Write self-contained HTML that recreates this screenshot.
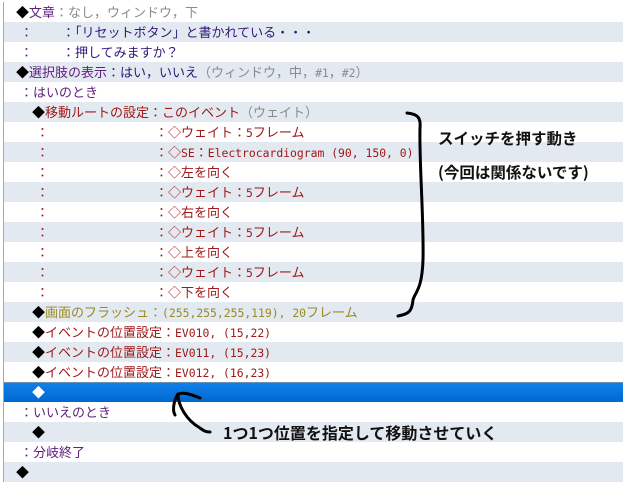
<!DOCTYPE html>
<html><head><meta charset="utf-8"><style>
body{margin:0;width:623px;height:480px;overflow:hidden;background:#fff;position:relative;font-family:"Noto Sans CJK JP",sans-serif;font-size:13px;}
#list{position:absolute;left:3px;top:2px;width:620px;border-left:1px solid #a0a8b0;}
.r{height:20px;line-height:20px;position:relative;white-space:nowrap;}
.r:nth-child(even){background:#e3e9f0;}
.r span.a{position:absolute;top:0;}
i{font-style:normal;font-family:"DejaVu Sans Mono",monospace;font-size:11.4px;}
.sel{background:linear-gradient(#1080e8,#0068d0)!important;border-top:1px solid #6a90b8;height:19px!important;color:#fff;}
.p{color:#602080}.g{color:#8a8a8a}.b{color:#301878}.red{color:#a01818}.ol{color:#9a8a20}.k{color:#000}
.ann{position:absolute;font-family:"Noto Sans CJK JP",sans-serif;font-weight:bold;font-size:15.5px;color:#111;line-height:20px;}
</style></head><body>
<div id="list">
<div class="r"><span class="a" style="left:12px"><span class="k">◆</span><span class="p">文章</span><span class="g">：なし，ウィンドウ，下</span></span></div>
<div class="r"><span class="a p" style="left:16px">：</span><span class="a b" style="left:58px">：「リセットボタン」と書かれている・・・</span></div>
<div class="r"><span class="a p" style="left:16px">：</span><span class="a b" style="left:58px">：押してみますか？</span></div>
<div class="r"><span class="a" style="left:12px"><span class="k">◆</span><span class="p">選択肢の表示</span><span class="b">：はい，いいえ</span><span class="g">（ウィンドウ，中，<i>#1</i>，<i>#2</i>）</span></span></div>
<div class="r"><span class="a p" style="left:16px">：はいのとき</span></div>
<div class="r"><span class="a" style="left:28px"><span class="k">◆</span><span class="red">移動ルートの設定：このイベント</span><span class="g">（ウェイト）</span></span></div>
<div class="r red"><span class="a" style="left:32px">：</span><span class="a" style="left:151px">：◇ウェイト：<i>5</i>フレーム</span></div>
<div class="r red"><span class="a" style="left:32px">：</span><span class="a" style="left:151px">：◇<i>SE</i>：<i>Electrocardiogram (90, 150, 0)</i></span></div>
<div class="r red"><span class="a" style="left:32px">：</span><span class="a" style="left:151px">：◇左を向く</span></div>
<div class="r red"><span class="a" style="left:32px">：</span><span class="a" style="left:151px">：◇ウェイト：<i>5</i>フレーム</span></div>
<div class="r red"><span class="a" style="left:32px">：</span><span class="a" style="left:151px">：◇右を向く</span></div>
<div class="r red"><span class="a" style="left:32px">：</span><span class="a" style="left:151px">：◇ウェイト：<i>5</i>フレーム</span></div>
<div class="r red"><span class="a" style="left:32px">：</span><span class="a" style="left:151px">：◇上を向く</span></div>
<div class="r red"><span class="a" style="left:32px">：</span><span class="a" style="left:151px">：◇ウェイト：<i>5</i>フレーム</span></div>
<div class="r red"><span class="a" style="left:32px">：</span><span class="a" style="left:151px">：◇下を向く</span></div>
<div class="r"><span class="a" style="left:28px"><span class="k">◆</span><span class="ol">画面のフラッシュ：<i>(255,255,255,119), 20</i>フレーム</span></span></div>
<div class="r"><span class="a" style="left:28px"><span class="k">◆</span><span class="red">イベントの位置設定：<i>EV010, (15,22)</i></span></span></div>
<div class="r"><span class="a" style="left:28px"><span class="k">◆</span><span class="red">イベントの位置設定：<i>EV011, (15,23)</i></span></span></div>
<div class="r"><span class="a" style="left:28px"><span class="k">◆</span><span class="red">イベントの位置設定：<i>EV012, (16,23)</i></span></span></div>
<div class="r sel"><span class="a" style="left:28px;top:-1px">◆</span></div>
<div class="r"><span class="a p" style="left:16px">：いいえのとき</span></div>
<div class="r"><span class="a k" style="left:28px">◆</span></div>
<div class="r"><span class="a p" style="left:16px">：分岐終了</span></div>
<div class="r"><span class="a k" style="left:12px">◆</span></div>
</div>
<svg style="position:absolute;left:0;top:0" width="623" height="480">
<path d="M407,113 C418,114 421,118 420,128 C419,160 424,220 423,260 C422,290 415,292 413,300 C412,310 410,314 398,316" fill="none" stroke="#000" stroke-width="3" stroke-linecap="round"/>
<path d="M200,398 C190,394 184,392 178,394 C174,400 172,410 175,415 M178,394 C178,405 186,420 200,428 C204,431 206,432 210,432" fill="none" stroke="#000" stroke-width="3" stroke-linecap="round"/>
</svg>
<div class="ann" style="left:438px;top:128px">スイッチを押す動き</div>
<div class="ann" style="left:438px;top:162px">(今回は関係ないです)</div>
<div class="ann" style="left:223px;top:422px;font-size:16px">1つ1つ位置を指定して移動させていく</div>
</body></html>
